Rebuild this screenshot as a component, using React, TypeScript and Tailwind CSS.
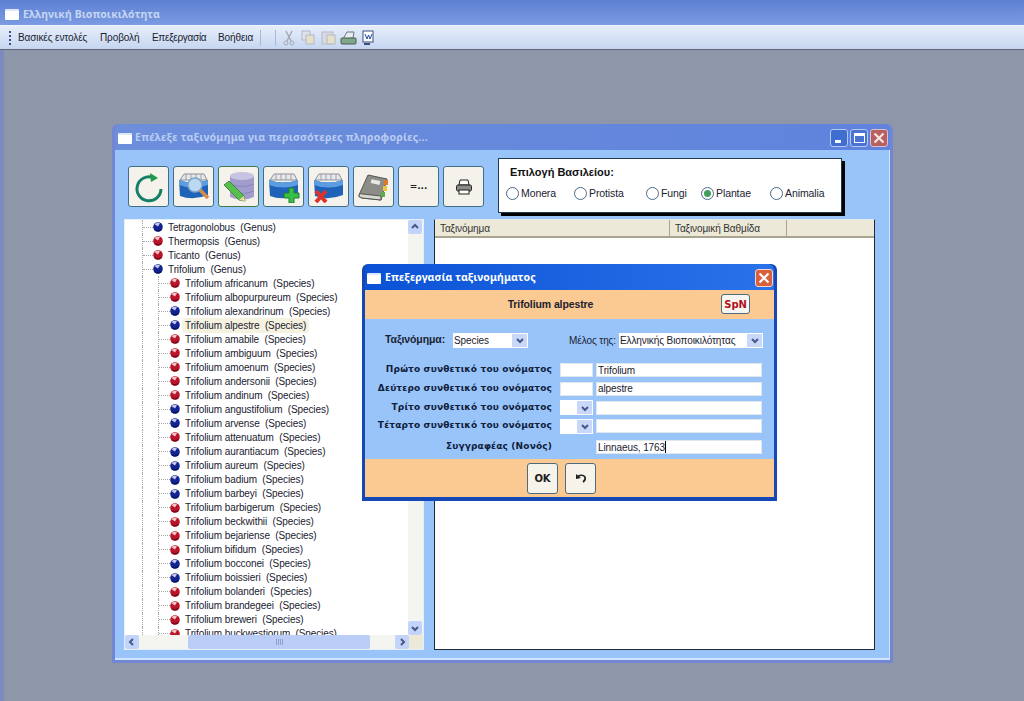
const ui = "font-['Liberation_Sans',Arial,sans-serif]";
const caption = "font-['Noto_Sans',sans-serif] font-bold text-[10.5px] whitespace-nowrap";

const species: [string, "r" | "b"][] = [
  ["africanum", "r"], ["albopurpureum", "r"], ["alexandrinum", "b"], ["alpestre", "b"],
  ["amabile", "r"], ["ambiguum", "r"], ["amoenum", "r"], ["andersonii", "r"], ["andinum", "r"],
  ["angustifolium", "b"], ["arvense", "b"], ["attenuatum", "r"], ["aurantiacum", "b"],
  ["aureum", "b"], ["badium", "b"], ["barbeyi", "b"], ["barbigerum", "r"], ["beckwithii", "r"],
  ["bejariense", "r"], ["bifidum", "r"], ["bocconei", "b"], ["boissieri", "b"],
  ["bolanderi", "r"], ["brandegeei", "r"], ["breweri", "r"], ["buckwestiorum", "r"],
];

const genera: [string, "r" | "b"][] = [
  ["Tetragonolobus", "b"], ["Thermopsis", "r"], ["Ticanto", "r"], ["Trifolium", "b"],
];

const Ball = ({ c }: { c: "r" | "b" }) => (
  <svg width="10" height="10" viewBox="0 0 10 10" className="shrink-0">
    <circle cx="5" cy="5" r="4.8" fill={c === "r" ? "#b8142a" : "#13238f"} />
    <path d="M1.5 2.2 Q4 0 7 1.2 L5 4.6 Z" fill={c === "r" ? "#f4c4c4" : "#c4c8ee"} />
    <path d="M1 7 Q5 9.5 8.8 6.5 L8 8.5 Q5 10.5 2 8.6 Z" fill={c === "r" ? "#6e0a18" : "#0a1258"} />
  </svg>
);

const Guide = ({ w, stub }: { w: number; stub?: boolean }) => (
  <div className="shrink-0 h-full border-l border-dotted border-[#a8a8a8] flex items-center" style={{ width: w }}>
    {stub && <div className="w-full border-t border-dotted border-[#a8a8a8]" />}
  </div>
);

const GenusRow = ({ name, c }: { name: string; c: "r" | "b" }) => (
  <div className="h-[14.04px] flex items-center pl-[17px]">
    <Guide w={11} stub />
    <Ball c={c} />
    <span className="ml-[5px] whitespace-pre">{name}  (Genus)</span>
  </div>
);

const SpeciesRow = ({ name, c }: { name: string; c: "r" | "b" }) => (
  <div className="h-[14.04px] flex items-center pl-[17px]">
    <Guide w={16} />
    <Guide w={12} stub />
    <Ball c={c} />
    <span className={`ml-[2px] px-[3px] whitespace-pre ${name === "alpestre" ? "bg-[#f5f2e0] rounded-sm" : ""}`}>
      Trifolium {name}  (Species)
    </span>
  </div>
);

const WinIcon = () => (
  <div className="w-[14px] h-[11px] bg-white rounded-[1px] border-t-[2px] border-[#dfe8fa] shrink-0" />
);

const Chevron = ({ dir }: { dir: "up" | "down" | "left" | "right" }) => {
  const d = {
    up: "M2 6 L5 3 L8 6",
    down: "M2 4 L5 7 L8 4",
    left: "M6 2 L3 5 L6 8",
    right: "M4 2 L7 5 L4 8",
  }[dir];
  return (
    <svg width="10" height="10" viewBox="0 0 10 10">
      <path d={d} fill="none" stroke="#46598a" strokeWidth="2" />
    </svg>
  );
};

const ScrollBtn = ({ dir }: { dir: "up" | "down" | "left" | "right" }) => (
  <div className="w-[14px] h-[14px] bg-[#c3d4fa] rounded-[2px] flex items-center justify-center shrink-0">
    <Chevron dir={dir} />
  </div>
);

const ToolBtn = ({ children, active, w = 41 }: { children: React.ReactNode; active?: boolean; w?: number }) => (
  <div
    className={`h-[41px] rounded-[3px] bg-[#f4f2ea] flex items-center justify-center shrink-0 border-[1.5px] ${
      active ? "border-[#3f7a4a] bg-[#f0efe2]" : "border-[#3f6f84]"
    }`}
    style={{ width: w }}
  >
    {children}
  </div>
);

const Box = ({ children }: { children?: React.ReactNode }) => (
  <svg width="34" height="32" viewBox="0 0 34 32">
    <path d="M3 9 L7 3 L27 3 L30 9 Z" fill="#e8e8e8" stroke="#8a8f9c" />
    <path d="M9 3 V9 M14 3 V9 M19 3 V9 M24 3 V9" stroke="#9aa0ae" />
    <path d="M2 9 Q16 14 31 9 L31 24 Q16 30 3 25 Z" fill="#1f63b8" />
    <path d="M2 9 Q16 14 31 9 L31 14 Q16 19 2 14 Z" fill="#5c9ce0" />
    {children}
  </svg>
);

const Radio = ({ label, on, w }: { label: string; on?: boolean; w: number }) => (
  <div className="flex items-center gap-[2px]" style={{ width: w }}>
    <div className="w-[13px] h-[13px] rounded-full bg-white border border-[#4a6a8a] flex items-center justify-center shrink-0">
      {on && <div className="w-[7px] h-[7px] rounded-full bg-[#3fa05a]" />}
    </div>
    <span>{label}</span>
  </div>
);

const Combo = ({ w, text }: { w: number; text: string }) => (
  <div className="h-[15px] bg-white flex items-center pl-[1px] shrink-0" style={{ width: w }}>
    <span className="flex-1 whitespace-nowrap overflow-hidden">{text}</span>
    <div className="w-[15px] h-[13px] bg-[#c9d8f8] flex items-center justify-center mr-[1px]">
      <Chevron dir="down" />
    </div>
  </div>
);

const Field = ({ w, text, caret }: { w: number; text?: string; caret?: boolean }) => (
  <div className="h-[14px] bg-white border border-[#dfe6ee] flex items-center pl-[1px] shrink-0" style={{ width: w }}>
    <span>{text}</span>
    {caret && <div className="w-px h-[12px] bg-black" />}
  </div>
);

const NameRow = ({ label, h, pre, text, caret }: { label: string; h: number; pre: "input" | "combo" | "none"; text?: string; caret?: boolean }) => (
  <div className="flex items-center" style={{ height: h }}>
    <div className="w-[185px] text-right font-['DejaVu_Sans',sans-serif] font-bold text-[9px] text-[#10203a] tracking-[0.15px] whitespace-nowrap">
      {label}
    </div>
    <div className="w-[36px] ml-[8px] shrink-0">
      {pre === "input" && <Field w={33} />}
      {pre === "combo" && <Combo w={33} text="" />}
    </div>
    <Field w={166} text={text} caret={caret} />
  </div>
);

export default function App() {
  return (
    <div className={`relative w-[1024px] h-[701px] overflow-hidden bg-[#8e96a9] flex flex-col text-[10px] tracking-[-0.1px] text-[#1a2230] ${ui}`}>
      {/* main window */}
      <div className="h-[25px] bg-gradient-to-b from-[#5d80d2] to-[#7b9be2] flex items-center gap-[4px] pl-[5px] pt-[4px] shrink-0">
        <WinIcon />
        <span className={`${caption} text-[#c6d6f2] tracking-[0.1px]`}>Ελληνική Βιοποικιλότητα</span>
      </div>
      <div className="h-[25px] bg-gradient-to-b from-[#e6eefb] to-[#c6d6f0] border-t border-[#f1f5fd] border-b border-b-[#5e6678] flex items-center pl-[18px] shrink-0 relative">
        <div className="absolute left-[9px] top-[5px] h-[14px] w-[2px] border-l-2 border-dotted border-[#36518c]" />
        <span className="w-[82px] whitespace-nowrap">Βασικές εντολές</span>
        <span className="w-[52px]">Προβολή</span>
        <span className="w-[66px] tracking-[-0.3px]">Επεξεργασία</span>
        <span className="w-[42px]">Βοήθεια</span>
        <div className="w-px h-[16px] bg-[#a9b8d4] mr-[14px]" />
        <div className="w-px h-[16px] bg-[#a9b8d4] mr-[6px]" />
        <svg width="105" height="18" viewBox="0 0 105 18">
          <path d="M4 2 L9 12 M10 2 L5 12" stroke="#a6abb2" strokeWidth="1.5" />
          <circle cx="4" cy="14" r="2" fill="none" stroke="#a6abb2" />
          <circle cx="10" cy="14" r="2" fill="none" stroke="#a6abb2" />
          <g transform="translate(-3 0)">
            <rect x="23" y="2" width="8" height="9" fill="#dfe3ea" stroke="#b3b9c3" />
            <rect x="27" y="6" width="8" height="9" fill="#e6dfca" stroke="#b3b9c3" />
          </g>
          <g transform="translate(-4 0)">
            <rect x="44" y="3" width="11" height="12" fill="#d6dae2" stroke="#b3b9c3" />
            <rect x="49" y="6" width="8" height="9" fill="#e6dfca" stroke="#b3b9c3" />
          </g>
          <g transform="translate(-5 0)">
            <path d="M66 10 L70 3 H77 L76 9 Z" fill="#e8ecf2" stroke="#6a7482" />
            <rect x="64" y="9" width="15" height="6" rx="1" fill="#7fa88a" stroke="#4a5a52" />
          </g>
          <g transform="translate(-6 0)">
            <rect x="87" y="2" width="10" height="11" fill="#fff" stroke="#39507c" />
            <path d="M89 5 L91 10 L92.5 6 L94 10 L96 5" fill="none" stroke="#1f4ea0" />
            <rect x="88" y="14" width="6" height="2" fill="#39507c" />
          </g>
        </svg>
      </div>
      <div className="flex-1 border-l-4 border-[#7c8ac0]" />

      {/* taxon browser window */}
      <div className="absolute left-[112px] top-[124px] w-[781px] h-[539px] rounded-t-[6px] bg-[#7386d2] p-[3px] pt-0 flex flex-col">
        <div className="h-[26px] flex items-center gap-[3px] pl-[3px] pr-[2px] pt-[2px] shrink-0 rounded-t-[6px] bg-gradient-to-r from-[#6d8edb] to-[#5f83dd]">
          <WinIcon />
          <span className={`flex-1 ${caption} text-[#b9cdf2] tracking-[0.25px]`}>
            Επέλεξε ταξινόμημα για περισσότερες πληροφορίες...
          </span>
          <div className="flex gap-[2px]">
            <div className="w-[18px] h-[18px] rounded-[3px] bg-[#3d6ed0] border border-[#b7c8ee] flex items-end pl-[4px] pb-[3px]">
              <div className="w-[6px] h-[3px] bg-white" />
            </div>
            <div className="w-[18px] h-[18px] rounded-[3px] bg-[#4a74d4] border border-[#b7c8ee] flex items-center justify-center">
              <div className="w-[11px] h-[10px] border border-t-[3px] border-white" />
            </div>
            <div className="w-[18px] h-[18px] rounded-[3px] bg-[#b8605f] border border-[#d8c0d0] flex items-center justify-center">
              <svg width="12" height="12" viewBox="0 0 12 12">
                <path d="M1.5 1.5 L10.5 10.5 M10.5 1.5 L1.5 10.5" stroke="#f6e6e4" strokeWidth="2.2" />
              </svg>
            </div>
          </div>
        </div>

        <div className="flex-1 bg-[#99c4fa] border-r border-b-2 border-[#cfe4ff] pl-[9px] pr-[14px] pb-[8px] flex flex-col min-h-0">
          {/* toolbar and kingdom picker */}
          <div className="h-[69px] flex items-start shrink-0">
            <div className="flex gap-[4px] pl-[4px] pt-[16px]">
              <ToolBtn>
                <svg width="30" height="32" viewBox="0 0 30 32">
                  <path d="M19 6.5 A12 12 0 1 0 27 18" fill="none" stroke="#14806a" strokeWidth="3" />
                  <path d="M16 2 L24 7 L17 11 Z" fill="#1f9a4a" />
                </svg>
              </ToolBtn>
              <ToolBtn>
                <Box>
                  <circle cx="18" cy="14" r="7" fill="#bcd9f4" stroke="#7aa4c8" strokeWidth="1.5" />
                  <path d="M23 19 L31 27" stroke="#d88a4a" strokeWidth="3.5" />
                </Box>
              </ToolBtn>
              <ToolBtn active>
                <svg width="36" height="34" viewBox="0 0 36 34">
                  <path d="M9 6 V27 Q21 32 33 27 V6 Z" fill="#a09ccc" />
                  <ellipse cx="21" cy="6" rx="12" ry="4" fill="#c6c4e2" />
                  <path d="M9 14 Q21 19 33 14 M9 21 Q21 26 33 21" fill="none" stroke="#8a86ba" />
                  <path d="M3 15 L8 11 L23 26 L24 31 L18 30 Z" fill="#58c04a" stroke="#3f8a3a" />
                  <path d="M18 30 L24 31 L23 26 Z" fill="#f0d8a8" />
                </svg>
              </ToolBtn>
              <ToolBtn>
                <Box>
                  <path d="M22 17 H27 V22 H32 V27 H27 V32 H22 V27 H17 V22 H22 Z" fill="#38c044" stroke="#1f7a34" />
                </Box>
              </ToolBtn>
              <ToolBtn>
                <Box>
                  <path d="M4 20 L14 31 M14 20 L4 31" stroke="#d8342c" strokeWidth="4" />
                </Box>
              </ToolBtn>
              <ToolBtn>
                <svg width="34" height="32" viewBox="0 0 34 32">
                  <path d="M2 24 L11 4 L30 8 L24 29 L5 27 Q1 26 2 24 Z" fill="#8c8c88" stroke="#55554f" />
                  <path d="M2 24 Q3 22 6 23 L24 25 L24 29 L5 27 Q1 26 2 24 Z" fill="#d8d8d2" stroke="#55554f" />
                  <rect x="14" y="9" width="9" height="4" transform="rotate(12 18 11)" fill="#e8e8e4" />
                  <rect x="27" y="9" width="4" height="5" fill="#e07a30" />
                  <rect x="26" y="15" width="4" height="5" fill="#e8c838" />
                  <rect x="24" y="21" width="4" height="5" fill="#58b048" />
                </svg>
              </ToolBtn>
              <ToolBtn>
                <span className="font-['DejaVu_Sans',sans-serif] font-bold text-[9px] text-[#202020]">=...</span>
              </ToolBtn>
              <ToolBtn>
                <svg width="18" height="16" viewBox="0 0 18 16">
                  <path d="M5 1 H13 L14 6 H4 Z" fill="#fff" stroke="#202020" />
                  <rect x="1.5" y="6" width="15" height="6" rx="1.5" fill="#8a8a8a" stroke="#202020" />
                  <rect x="4" y="11" width="10" height="4" fill="#fff" stroke="#202020" />
                </svg>
              </ToolBtn>
            </div>
            <div className="ml-[14px] mt-[8px] w-[344px] h-[55px] bg-white border border-[#203a50] shadow-[3px_3px_0_#000] pl-[7px] flex flex-col shrink-0">
              <div className="h-[27px] pl-[4px] pt-[5px] font-bold text-[11px] tracking-normal text-[#111]">Επιλογή Βασιλείου:</div>
              <div className="flex items-center text-[10.5px]">
                <Radio label="Monera" w={68} />
                <Radio label="Protista" w={72} />
                <Radio label="Fungi" w={55} />
                <Radio label="Plantae" w={69} on />
                <Radio label="Animalia" w={60} />
              </div>
            </div>
          </div>

          {/* tree and table */}
          <div className="flex-1 flex gap-[10px] min-h-0">
            <div className="w-[300px] bg-white border border-[#e6eef8] flex flex-col">
              <div className="flex-1 flex min-h-0">
                <div className="flex-1 overflow-hidden">
                  {genera.map(([n, c]) => <GenusRow key={n} name={n} c={c} />)}
                  {species.map(([n, c]) => <SpeciesRow key={n} name={n} c={c} />)}
                </div>
                <div className="w-[15px] flex flex-col justify-between bg-[#f4f5f0]">
                  <ScrollBtn dir="up" />
                  <ScrollBtn dir="down" />
                </div>
              </div>
              <div className="h-[14px] flex items-center bg-[#f4f5f0] shrink-0 relative">
                <ScrollBtn dir="left" />
                <div className="flex-1 h-full pl-[49px] pr-[25px]">
                  <div className="h-full bg-[#b9cdf6] rounded-[2px] flex items-center justify-center gap-px">
                    <div className="w-px h-[6px] bg-[#8ea2cc]" />
                    <div className="w-px h-[6px] bg-[#8ea2cc]" />
                    <div className="w-px h-[6px] bg-[#8ea2cc]" />
                    <div className="w-px h-[6px] bg-[#8ea2cc]" />
                  </div>
                </div>
                <ScrollBtn dir="right" />
                <div className="w-[14px] h-full bg-[#ece9d8]" />
              </div>
            </div>
            <div className="flex-1 bg-white border border-[#1c2a3a] border-t-[#e0e6ee]">
              <div className="h-[18px] bg-[#ece9d8] border-b-2 border-[#a8a490] flex text-[#333]">
                <div className="w-[235px] border-r border-[#a8a490] pl-[5px] flex items-center">Ταξινόμημα</div>
                <div className="w-[117px] border-r border-[#a8a490] pl-[5px] flex items-center">Ταξινομική Βαθμίδα</div>
              </div>
            </div>
          </div>
        </div>
      </div>

      {/* edit dialog */}
      <div className="absolute left-[362px] top-[264px] w-[415px] h-[237px] rounded-t-[6px] bg-[#1548b4] p-[3px] pt-0 pb-[4px] flex flex-col">
        <div className="h-[26px] flex items-center gap-[4px] pl-[2px] pr-[1px] pt-[2px] shrink-0 rounded-t-[6px] bg-gradient-to-r from-[#0a52d6] to-[#2a72ea]">
          <WinIcon />
          <span className={`flex-1 ${caption} text-white tracking-[0.1px]`}>Επεξεργασία ταξινομήματος</span>
          <div className="w-[18px] h-[18px] rounded-[3px] bg-[#d8603c] border border-[#f0d8d0] flex items-center justify-center">
            <svg width="12" height="12" viewBox="0 0 12 12">
              <path d="M1.5 1.5 L10.5 10.5 M10.5 1.5 L1.5 10.5" stroke="#fff" strokeWidth="2.2" />
            </svg>
          </div>
        </div>
        <div className="flex-1 flex flex-col bg-[#99c4fa] text-[#1a2230]">
          <div className="h-[29px] bg-[#fbc992] flex items-center shrink-0 relative">
            <span className="w-full text-center pr-[38px] font-bold text-[10.5px]">Trifolium alpestre</span>
            <div className="absolute left-[356px] top-[4px] w-[29px] h-[20px] bg-[#f8f6f0] border border-[#506a80] rounded-[3px] flex items-center justify-center font-['DejaVu_Sans',sans-serif] font-bold text-[10px] text-[#b01020]">
              SpN
            </div>
          </div>
          <div className="flex-1 flex flex-col pl-[2px] pt-[13px]">
            <div className="flex items-center h-[16px]">
              <span className="w-[81px] pl-[18px] font-bold text-[10.5px] whitespace-nowrap">Ταξινόμημα:</span>
              <div className="ml-[5px]"><Combo w={75} text="Species" /></div>
              <span className="w-[91px] text-right pr-[3px] whitespace-nowrap">Μέλος της:</span>
              <Combo w={144} text="Ελληνικής Βιοποικιλότητας" />
            </div>
            <div className="h-[13px]" />
            <NameRow label="Πρώτο συνθετικό του ονόματος" h={18} pre="input" text="Trifolium" />
            <NameRow label="Δεύτερο συνθετικό του ονόματος" h={19} pre="input" text="alpestre" />
            <NameRow label="Τρίτο συνθετικό του ονόματος" h={19} pre="combo" />
            <NameRow label="Τέταρτο συνθετικό του ονόματος" h={18} pre="combo" />
            <div className="h-[3px]" />
            <NameRow label="Συγγραφέας (Νονός)" h={18} pre="none" text="Linnaeus, 1763" caret />
          </div>
          <div className="h-[38px] bg-[#fbc992] flex items-center pl-[162px] gap-[7px] shrink-0">
            <div className="w-[31px] h-[31px] bg-[#f6f3ea] border border-[#506a80] rounded-[3px] flex items-center justify-center font-['DejaVu_Sans',sans-serif] font-bold text-[10px] text-[#202020]">
              OK
            </div>
            <div className="w-[31px] h-[31px] bg-[#f6f3ea] border border-[#506a80] rounded-[3px] flex items-center justify-center">
              <svg width="12" height="10" viewBox="0 0 12 10">
                <path d="M3 3 Q8 1 10 4 Q11 7 8 9" fill="none" stroke="#202020" strokeWidth="1.6" />
                <path d="M1 1 L1 6 L6 5 Z" fill="#202020" />
              </svg>
            </div>
          </div>
        </div>
      </div>
    </div>
  );
}
